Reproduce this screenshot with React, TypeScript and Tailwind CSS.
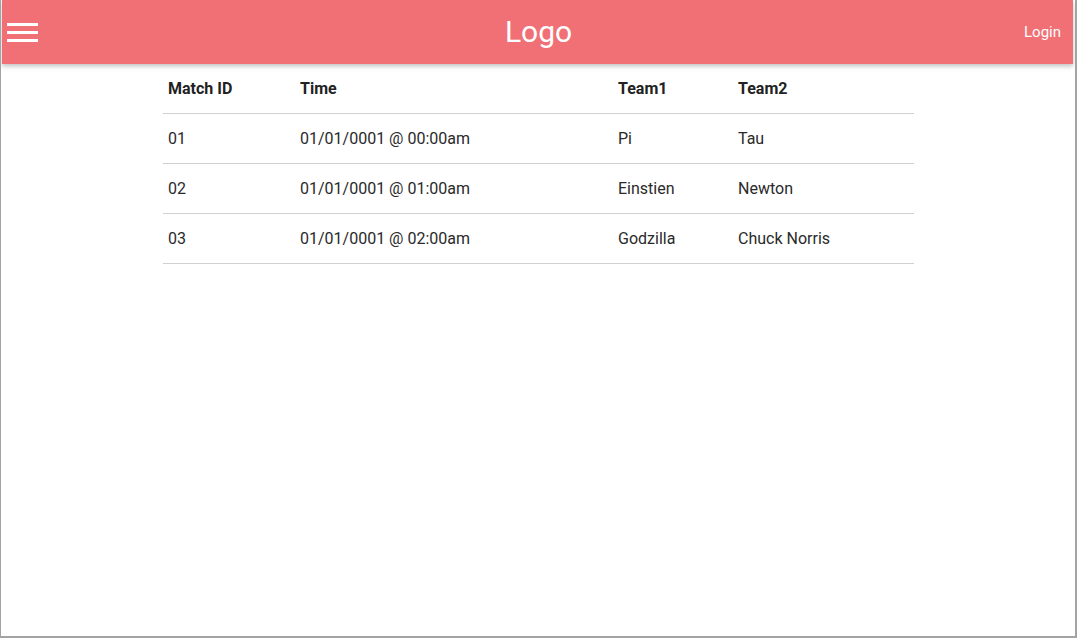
import React from 'react'

const matches = [
  { id: '01', time: '01/01/0001 @ 00:00am', team1: 'Pi', team2: 'Tau' },
  { id: '02', time: '01/01/0001 @ 01:00am', team1: 'Einstien', team2: 'Newton' },
  { id: '03', time: '01/01/0001 @ 02:00am', team1: 'Godzilla', team2: 'Chuck Norris' },
]

const cols = 'grid grid-cols-[132px_318px_120px_181px] h-[50px] items-center border-b border-[#d0d0d0]'

export default function App() {
  return (
    <div
      className="w-[1077px] h-[638px] bg-white border-l border-r-2 border-b-2 border-[#a3a3a3] overflow-hidden"
      style={{ fontFamily: 'Roboto, "Noto Sans", sans-serif' }}
    >
      {/* Navbar */}
      <nav className="ml-[1px] mr-[2px] h-[64px] bg-[#f07075] relative flex items-center justify-center shadow-[0_2px_4px_rgba(0,0,0,0.18),0_3px_6px_rgba(0,0,0,0.08)]">
        <button className="absolute left-[5px] top-[23px] flex flex-col gap-[5px]">
          <span className="block w-[31px] h-[3px] bg-white" />
          <span className="block w-[31px] h-[3px] bg-white" />
          <span className="block w-[31px] h-[3px] bg-white" />
        </button>
        <span className="text-white text-[30px] leading-none -mt-[1px] ml-[2px]">Logo</span>
        <a className="absolute right-[12px] top-[22px] text-white text-[15px] leading-[20px]">Login</a>
      </nav>

      {/* Matches table */}
      <div className="ml-[162px] w-[751px] text-[16px] text-[#2a2a2a]">
        <div className={cols + ' font-bold text-[#222]'}>
          <div className="px-[5px]">Match ID</div>
          <div className="px-[5px]">Time</div>
          <div className="px-[5px]">Team1</div>
          <div className="px-[5px]">Team2</div>
        </div>
        {matches.map((m) => (
          <div key={m.id} className={cols}>
            <div className="px-[5px]">{m.id}</div>
            <div className="px-[5px]">{m.time}</div>
            <div className="px-[5px]">{m.team1}</div>
            <div className="px-[5px]">{m.team2}</div>
          </div>
        ))}
      </div>
    </div>
  )
}
